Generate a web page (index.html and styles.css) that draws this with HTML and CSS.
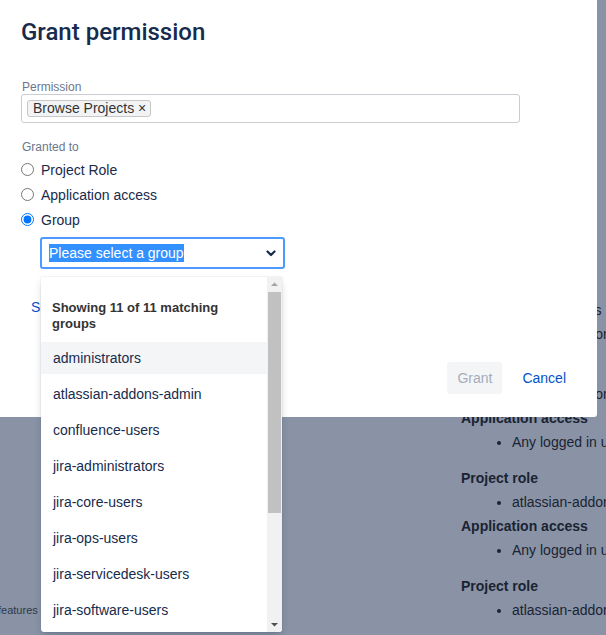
FILE: index.html
```html
<!DOCTYPE html>
<html lang="en">
<head>
<meta charset="utf-8">
<title>Grant permission</title>
<link rel="stylesheet" href="styles.css">
</head>
<body>
<div class="page">
  <div class="page-left">
    <p class="page-note">features of</p>
  </div>
  <div class="page-right">
    <ul class="bg-list bg-list-last">
      <li>Administrators</li>
      <li>atlassian-addons-project-access</li>
    </ul>
    <div class="bg-group">
      <div class="bg-heading">Project role</div>
      <ul class="bg-list"><li>atlassian-addons-project-access</li></ul>
      <div class="bg-heading">Application access</div>
      <ul class="bg-list bg-list-last"><li>Any logged in user</li></ul>
    </div>
    <div class="bg-group">
      <div class="bg-heading">Project role</div>
      <ul class="bg-list"><li>atlassian-addons-project-access</li></ul>
      <div class="bg-heading">Application access</div>
      <ul class="bg-list bg-list-last"><li>Any logged in user</li></ul>
    </div>
    <div class="bg-group">
      <div class="bg-heading">Project role</div>
      <ul class="bg-list"><li>atlassian-addons-project-access</li></ul>
    </div>
  </div>
</div>

<div class="dialog">
  <h1 class="dialog-title">Grant permission</h1>

  <div class="field field-permission">
    <div class="field-label">Permission</div>
    <div class="multi-select">
      <span class="chip">Browse Projects <span class="chip-remove">×</span></span>
    </div>
  </div>

  <div class="field field-granted">
    <div class="field-label">Granted to</div>
    <div class="radio-list">
      <label class="radio-row"><input class="radio" type="radio" name="grant"> Project Role</label>
      <label class="radio-row"><input class="radio" type="radio" name="grant"> Application access</label>
      <label class="radio-row"><input class="radio" type="radio" name="grant" checked> Group</label>
    </div>
    <div class="group-select">
      <span class="group-select-text">Please select a group</span>
      <svg class="group-select-chevron" width="10" height="7" viewBox="0 0 10 7"><polyline points="1.5,1.5 5,5 8.5,1.5" fill="none" stroke="#172b4d" stroke-width="2.2" stroke-linecap="round" stroke-linejoin="round"/></svg>
    </div>
  </div>

  <a class="show-link">Show more</a>

  <div class="dialog-footer">
    <button class="btn btn-grant" disabled>Grant</button>
    <button class="btn btn-cancel">Cancel</button>
  </div>

  <div class="dropdown">
    <div class="dropdown-list">
      <div class="dropdown-header">Showing 11 of 11 matching groups</div>
      <div class="dropdown-item is-active">administrators</div>
      <div class="dropdown-item">atlassian-addons-admin</div>
      <div class="dropdown-item">confluence-users</div>
      <div class="dropdown-item">jira-administrators</div>
      <div class="dropdown-item">jira-core-users</div>
      <div class="dropdown-item">jira-ops-users</div>
      <div class="dropdown-item">jira-servicedesk-users</div>
      <div class="dropdown-item">jira-software-users</div>
      <div class="dropdown-item">jira-users</div>
      <div class="dropdown-item">site-admins</div>
      <div class="dropdown-item">system-administrators</div>
    </div>
    <div class="scrollbar">
      <div class="scrollbar-btn">
        <svg width="15" height="15" viewBox="0 0 15 15"><polygon points="4,9 11,9 7.5,5.5" fill="#a3a3a3"/></svg>
      </div>
      <div class="scrollbar-track"><div class="scrollbar-thumb"></div></div>
      <div class="scrollbar-btn">
        <svg width="15" height="15" viewBox="0 0 15 15"><polygon points="4,6 11,6 7.5,9.5" fill="#505050"/></svg>
      </div>
    </div>
  </div>
</div>
</body>
</html>
```

FILE: styles.css
```css
html, body {
  margin: 0;
  padding: 0;
}

body {
  width: 606px;
  height: 635px;
  overflow: hidden;
  position: relative;
  font-family: "Liberation Sans", Arial, sans-serif;
  font-size: 14px;
  color: #172b4d;
  background: #8993a5;
}

/* background page (under the blanket) */
.page {
  display: flex;
  width: 606px;
  height: 635px;
  overflow: hidden;
  color: #1b2333;
}

.page-left {
  width: 461px;
  flex: none;
  display: flex;
  flex-direction: column;
  justify-content: flex-end;
  padding-bottom: 17px;
  box-sizing: border-box;
}

.page-note {
  margin: 0 0 0 -2px;
  font-size: 11px;
  line-height: 16px;
  color: #2f384a;
  white-space: nowrap;
}

.page-right {
  flex: 1;
  padding-top: 298px;
  white-space: nowrap;
  overflow: hidden;
}

.bg-heading {
  font-weight: bold;
  font-size: 14px;
  line-height: 24px;
}

.bg-list {
  margin: 0;
  padding-left: 51px;
  line-height: 24px;
  font-size: 14px;
}

.bg-list-last {
  margin-bottom: 12px;
}

/* dialog */
.dialog {
  position: absolute;
  top: 0;
  left: 0;
  width: 597px;
  height: 417px;
  box-sizing: border-box;
  padding: 17px 22px 23px 21px;
  background: #fff;
  border-radius: 0 0 3px 0;
  display: flex;
  flex-direction: column;
}

.dialog-title {
  margin: 0;
  font-family: Roboto, "Liberation Sans", sans-serif;
  font-weight: 500;
  font-size: 24px;
  line-height: 30px;
  color: #172b4d;
}

.field-label {
  font-size: 12px;
  line-height: 14px;
  color: #6b778c;
  padding-left: 1px;
}

.field-permission {
  margin-top: 33px;
}

.multi-select {
  width: 499px;
  height: 29px;
  box-sizing: border-box;
  border: 1px solid #c9ccd1;
  border-radius: 3px;
  display: flex;
  align-items: center;
  padding: 0 5px;
}

.chip {
  height: 17px;
  box-sizing: border-box;
  border: 1px solid #c7c7c7;
  border-radius: 3px;
  background: #f2f3f5;
  padding: 0 4px 0 5px;
  font-size: 14px;
  line-height: 15px;
  color: #333;
  white-space: nowrap;
}

.chip-remove {
  color: #333;
}

.field-granted {
  margin-top: 17px;
}

.radio-list {
  margin-top: 3px;
  display: flex;
  flex-direction: column;
}

.radio-row {
  height: 25px;
  display: flex;
  align-items: center;
  font-size: 14px;
  color: #172b4d;
}

.radio {
  width: 13px;
  height: 13px;
  margin: 0 7px 0 0;
}

.group-select {
  margin-top: 5px;
  margin-left: 19px;
  width: 245px;
  height: 32px;
  box-sizing: border-box;
  border: 2px solid #4c9aff;
  border-radius: 3px;
  display: flex;
  align-items: center;
  justify-content: space-between;
  padding: 0 7px;
}

.group-select-text {
  background: #3390ff;
  color: #fff;
  font-size: 14px;
  line-height: 18px;
}

.group-select-chevron {
  display: block;
}

.show-link {
  margin-top: 30px;
  padding-left: 10px;
  font-size: 14px;
  line-height: 16px;
  color: #0052cc;
  text-decoration: none;
}

.dialog-footer {
  margin-top: auto;
  display: flex;
  justify-content: flex-end;
  gap: 10px;
}

.btn {
  height: 32px;
  padding: 0 10px;
  border: none;
  border-radius: 3px;
  font-family: "Liberation Sans", Arial, sans-serif;
  font-size: 14px;
  background: transparent;
}

.btn-grant {
  background: #f4f5f7;
  color: #a5adba;
}

.btn-cancel {
  padding: 0 9px 0 10px;
  color: #0052cc;
}

/* dropdown overlay */
.dropdown {
  position: absolute;
  left: 41px;
  top: 277px;
  width: 241px;
  height: 355px;
  display: flex;
  background: #fff;
  border-radius: 0 0 3px 3px;
  box-shadow: 0 4px 8px -2px rgba(9, 30, 66, 0.25), 0 0 1px rgba(9, 30, 66, 0.31);
  overflow: hidden;
}

.dropdown-list {
  flex: 1;
  overflow: hidden;
}

.dropdown-header {
  padding: 23px 10px 10px 11px;
  font-weight: bold;
  font-size: 13px;
  line-height: 16px;
  color: #333;
}

.dropdown-item {
  height: 32px;
  line-height: 32px;
  margin-bottom: 4px;
  padding-left: 12px;
  font-size: 14px;
  color: #172b4d;
  white-space: nowrap;
}

.dropdown-item.is-active {
  background: #f4f5f7;
}

.scrollbar {
  width: 15px;
  flex: none;
  background: #f1f1f1;
  display: flex;
  flex-direction: column;
}

.scrollbar-btn {
  height: 15px;
  flex: none;
}

.scrollbar-btn svg {
  display: block;
}

.scrollbar-track {
  flex: 1;
}

.scrollbar-thumb {
  height: 221px;
  margin: 0 1px;
  background: #c1c1c1;
}
```
